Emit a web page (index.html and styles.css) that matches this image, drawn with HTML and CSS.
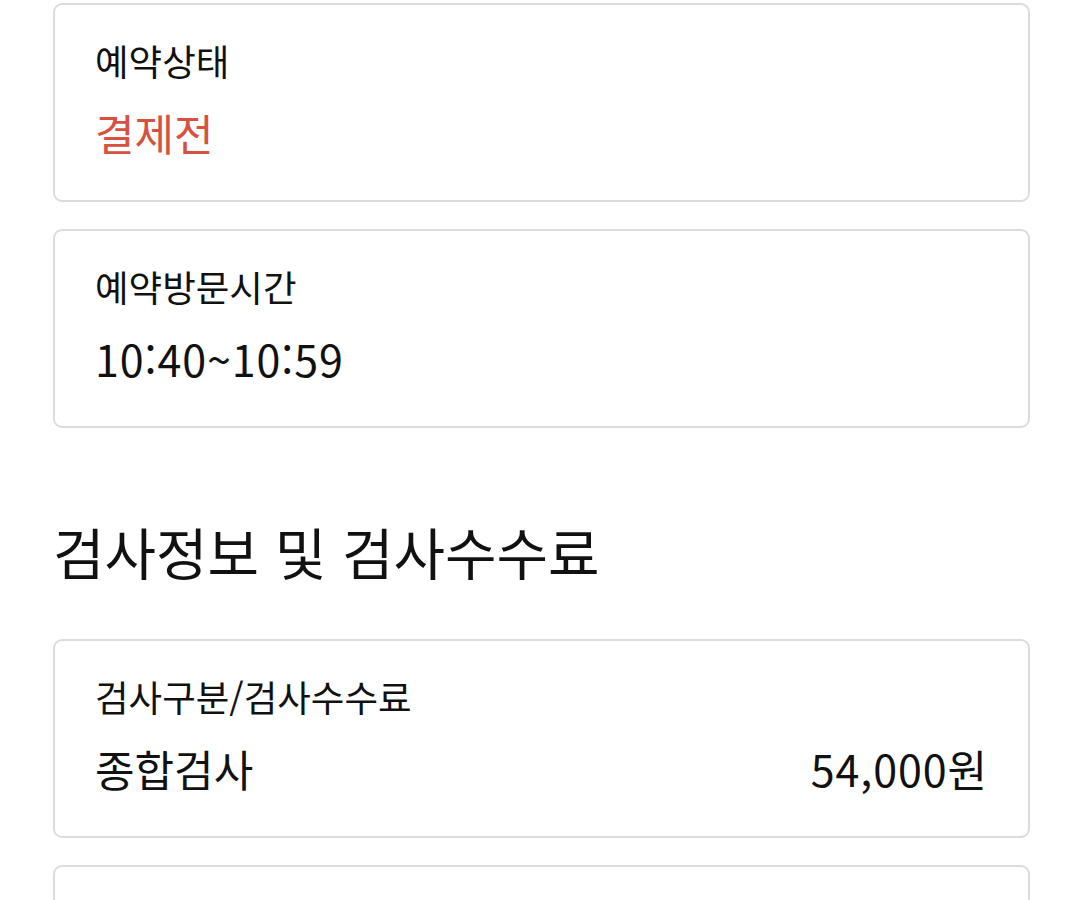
FILE: index.html
```html
<!DOCTYPE html>
<html lang="ko">
<head>
    <meta charset="UTF-8">
    <meta name="viewport" content="width=device-width, initial-scale=1.0">
    <title>예약정보</title>
    <link rel="stylesheet" href="styles.css">
</head>
<body>
    <div class="container">
        <div class="card">
            <div class="label">예약상태</div>
            <div class="value status">결제전</div>
        </div>
        <div class="card">
            <div class="label">예약방문시간</div>
            <div class="value num">10:40~10:59</div>
        </div>

        <h2 class="section-title">검사정보 및 검사수수료</h2>

        <div class="card">
            <div class="label">검사구분/검사수수료</div>
            <div class="value row">
                <span>종합검사</span>
                <span class="num">54,000원</span>
            </div>
        </div>
        <div class="card"></div>
    </div>
</body>
</html>
```

FILE: styles.css
```css
body {
    margin: 0;
    padding: 3px 0 0;
    background: #fff;
    color: #111;
    font-family: "Noto Sans CJK KR", "Noto Sans", sans-serif;
}
.container {
    margin: 0 50px 0 53px;
    display: flex;
    flex-direction: column;
    gap: 27px;
}
.card {
    border: 2px solid #dcdcdc;
    border-radius: 9px;
    padding: 32px 40px 0;
    height: 199px;
    box-sizing: border-box;
    flex-shrink: 0;
}
.label {
    font-size: 36.5px;
    line-height: 48px;
}
.value {
    font-size: 43px;
    line-height: 58px;
    margin-top: 18px;
}
.num {
    letter-spacing: 0.9px;
}
.status {
    color: #d8503f;
}
.row {
    display: flex;
    justify-content: space-between;
}
.section-title {
    font-size: 56px;
    font-weight: normal;
    line-height: 76px;
    margin: 58px 0 23px;
}
```
